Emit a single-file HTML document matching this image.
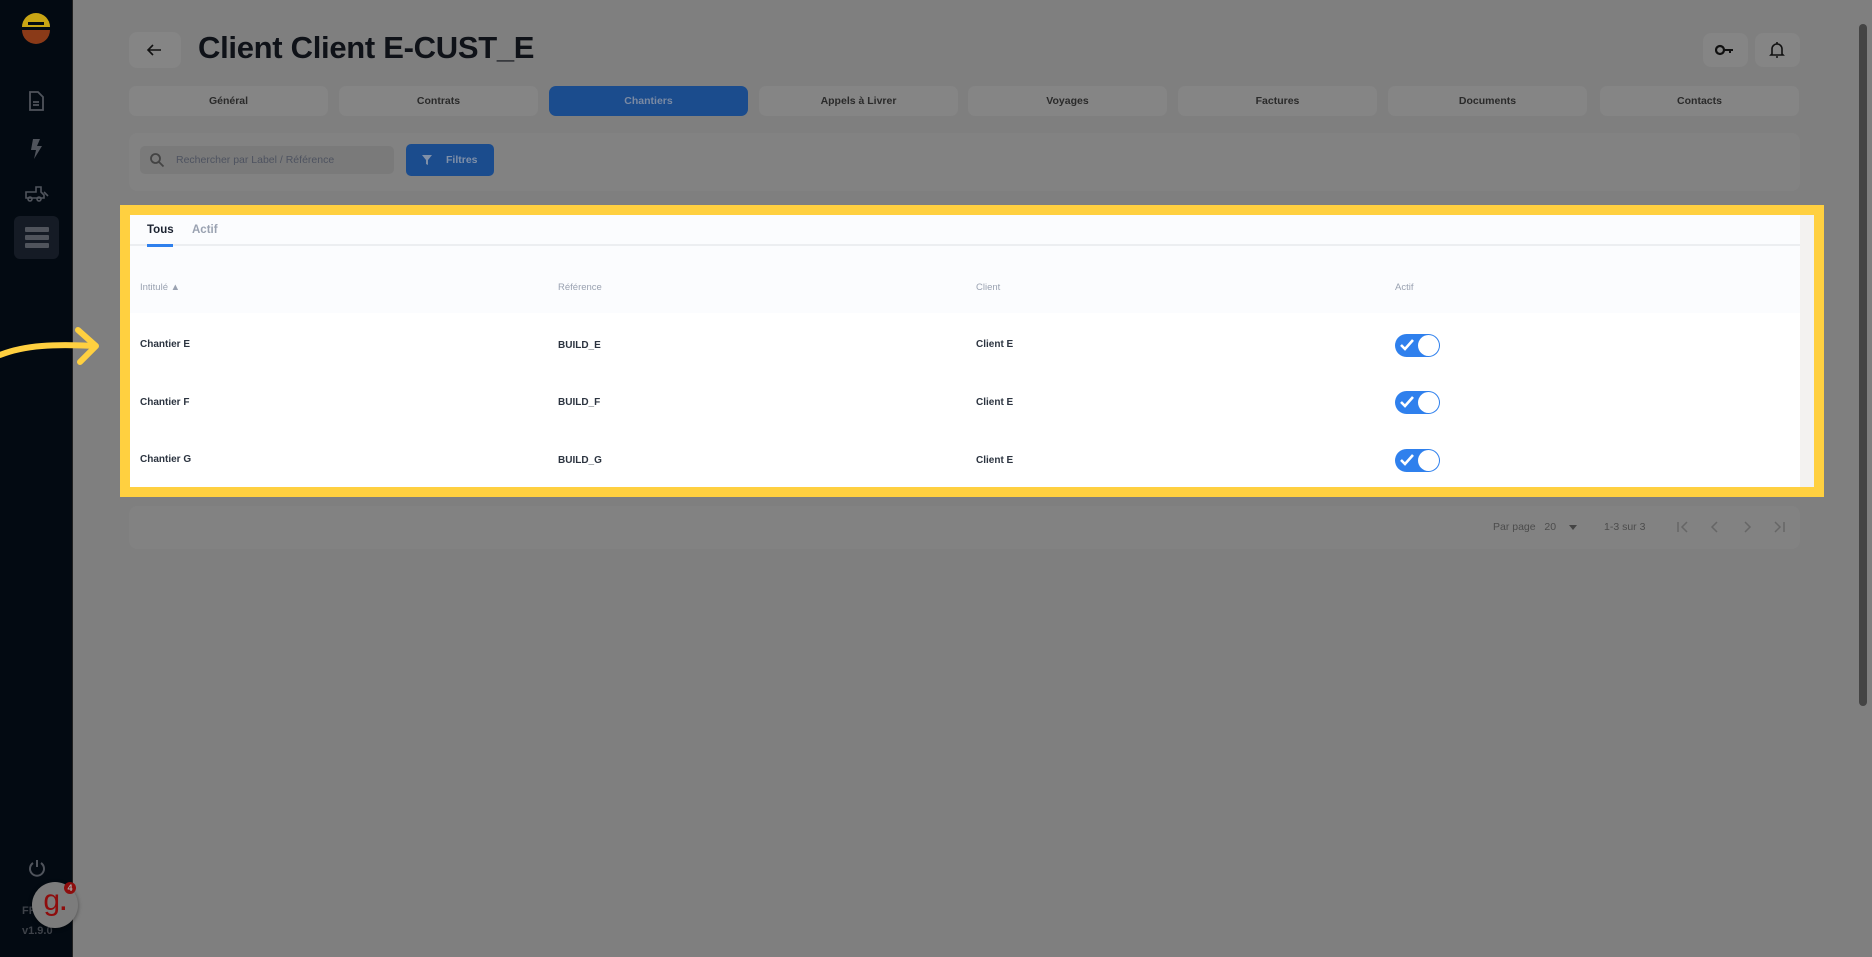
<!DOCTYPE html>
<html><head><meta charset="utf-8"><style>
*{box-sizing:border-box;margin:0;padding:0}
body{width:1872px;height:957px;overflow:hidden;background:#7f7f7f;font-family:"Liberation Sans",Arial,sans-serif;position:relative}
.a{position:absolute}
.side{left:0;top:0;width:73px;height:957px;background:#030a12;border-right:1px solid #222}
.btn{background:#858585;border-radius:8px}
.tab{position:absolute;top:86px;height:30px;width:199px;background:#858585;border-radius:7px;font-size:10.5px;font-weight:bold;color:#2a2a2a;text-align:center;line-height:30px}
.t{font-size:10px;font-weight:bold;color:#2c3440}
.h{font-size:9.5px;color:#9aa2b1}
.tg{position:absolute;width:45px;height:23px;border-radius:12px;background:#2f80ed}
.tg::after{content:"";position:absolute;right:1px;top:1px;width:21px;height:21px;border-radius:50%;background:#fff}
.pg{position:absolute;top:520px}
</style></head><body>
<div class="a side"></div>
<svg class="a" style="left:20px;top:13px" width="32" height="32" viewBox="0 0 32 32"><path d="M2 14 A14 14 0 0 1 30 14 Z" fill="#c9a514"/><rect x="8" y="9" width="16" height="3" fill="#030a12"/><path d="M2 17 H30 A14 14 0 0 1 2 17Z" fill="#8a3a18"/></svg>
<svg class="a" style="left:27px;top:91px" width="18" height="20" viewBox="0 0 18 20" fill="none" stroke="#50545c" stroke-width="1.8"><path d="M3 1h8l5 5v13H3z"/><path d="M6 11h6M6 14h6"/></svg>
<svg class="a" style="left:29px;top:139px" width="14" height="20" viewBox="0 0 14 20"><path d="M4 0h7l-3 7h5L5 20l2-9H2z" fill="#50545c"/></svg>
<svg class="a" style="left:24px;top:184px" width="26" height="18" viewBox="0 0 26 18" fill="none" stroke="#50545c" stroke-width="1.6"><path d="M2 8h10V3h5v5l3 3v3H2z"/><circle cx="6" cy="15" r="2"/><circle cx="15" cy="15" r="2"/><path d="M20 8l4 4"/></svg>
<div class="a" style="left:14px;top:216px;width:45px;height:43px;background:#151b25;border-radius:6px"></div>
<div class="a" style="left:25px;top:227px;width:24px;height:5px;background:#50545c;border-radius:1px"></div>
<div class="a" style="left:25px;top:235px;width:24px;height:5px;background:#50545c;border-radius:1px"></div>
<div class="a" style="left:25px;top:243px;width:24px;height:5px;background:#50545c;border-radius:1px"></div>
<svg class="a" style="left:28px;top:859px" width="18" height="18" viewBox="0 0 18 18" fill="none" stroke="#50545c" stroke-width="2"><path d="M5 4a7 7 0 1 0 8 0"/><path d="M9 1v7"/></svg>
<div class="a" style="left:22px;top:905px;font-size:11px;font-weight:bold;color:#3e4249">FR</div>
<div class="a" style="left:22px;top:925px;font-size:11px;font-weight:bold;color:#3e4249">v1.9.0</div>
<div class="a" style="left:32px;top:882px;width:46px;height:46px;border-radius:50%;background:#7c7c7c;box-shadow:0 1px 4px rgba(0,0,0,.4);font:30px 'Liberation Sans';color:#8e0d0d;text-align:center;line-height:38px">g<span style="font-size:24px;font-weight:bold">.</span></div>
<div class="a" style="left:64px;top:882px;width:12px;height:12px;border-radius:50%;background:#8e0d0d;color:#aaa;font-size:9px;text-align:center;line-height:12px;font-weight:bold">4</div>
<div class="a btn" style="left:129px;top:32px;width:52px;height:36px"></div>
<svg class="a" style="left:146px;top:42px" width="16" height="16" viewBox="0 0 16 16" fill="none" stroke="#111" stroke-width="1.6"><path d="M15 8H2M7 3L2 8l5 5"/></svg>
<div class="a" style="left:198px;top:30px;font-size:31px;font-weight:bold;color:#0f1218;letter-spacing:-0.3px">Client Client E-CUST_E</div>
<div class="a btn" style="left:1703px;top:33px;width:45px;height:34px"></div>
<div class="a btn" style="left:1755px;top:33px;width:45px;height:34px"></div>
<svg class="a" style="left:1715px;top:43px" width="20" height="14" viewBox="0 0 20 14"><circle cx="5" cy="7" r="4" fill="none" stroke="#111" stroke-width="2.2"/><path d="M9 6h9v2h-2v2h-2V8H9z" fill="#111"/></svg>
<svg class="a" style="left:1768px;top:41px" width="18" height="18" viewBox="0 0 18 18" fill="none" stroke="#111" stroke-width="1.6"><path d="M4 13V8a5 5 0 0 1 10 0v5l1 1H3z"/><path d="M9 1v2M8 16h2"/></svg>
<div class="tab" style="left:129px">Général</div>
<div class="tab" style="left:339px">Contrats</div>
<div class="tab" style="left:549px;background:#1b4c8d;color:#7b8aa3">Chantiers</div>
<div class="tab" style="left:759px">Appels à Livrer</div>
<div class="tab" style="left:968px">Voyages</div>
<div class="tab" style="left:1178px">Factures</div>
<div class="tab" style="left:1388px">Documents</div>
<div class="tab" style="left:1600px">Contacts</div>
<div class="a" style="left:129px;top:133px;width:1671px;height:58px;background:#828282;border-radius:8px"></div>
<div class="a" style="left:140px;top:146px;width:254px;height:28px;background:#7a7a7a;border-radius:5px"></div>
<svg class="a" style="left:149px;top:152px" width="16" height="16" viewBox="0 0 16 16" fill="none" stroke="#444" stroke-width="1.8"><circle cx="6.5" cy="6.5" r="4.5"/><path d="M10 10l4.5 4.5"/></svg>
<div class="a" style="left:176px;top:154px;font-size:10.5px;color:#4e5360">Rechercher par Label / Référence</div>
<div class="a" style="left:406px;top:144px;width:88px;height:32px;background:#1b4c8d;border-radius:5px"></div>
<svg class="a" style="left:422px;top:155px" width="10" height="10" viewBox="0 0 10 10"><path d="M0 0h10L6 5v5L4 9V5z" fill="#8090a8"/></svg>
<div class="a" style="left:446px;top:154px;font-size:10.5px;font-weight:bold;color:#8090a8">Filtres</div>
<div class="a" style="left:120px;top:205px;width:1704px;height:292px;background:#ffd040"></div>
<div class="a" style="left:130px;top:215px;width:1684px;height:272px;background:#f3f2f0"></div>
<div class="a" style="left:130px;top:215px;width:1670px;height:272px;background:#fff"></div>
<div class="a" style="left:130px;top:215px;width:1670px;height:98px;background:#fbfcfe"></div>
<div class="a" style="left:130px;top:244px;width:1670px;height:2px;background:#eceef1"></div>
<div class="a" style="left:147px;top:224px;font-size:11.5px;font-weight:bold;color:#1b2230">Tous</div>
<div class="a" style="left:192px;top:224px;font-size:11.5px;font-weight:bold;color:#9aa2b1">Actif</div>
<div class="a" style="left:147px;top:244px;width:26px;height:3px;background:#2f80ed"></div>
<div class="a h" style="left:140px;top:282px">Intitulé ▲</div>
<div class="a h" style="left:558px;top:282px">Référence</div>
<div class="a h" style="left:976px;top:282px">Client</div>
<div class="a h" style="left:1395px;top:282px">Actif</div>
<div class="a t" style="left:140px;top:339px">Chantier E</div>
<div class="a t" style="left:558px;top:340px">BUILD_E</div>
<div class="a t" style="left:976px;top:339px">Client E</div>
<div class="a t" style="left:140px;top:397px">Chantier F</div>
<div class="a t" style="left:558px;top:397px">BUILD_F</div>
<div class="a t" style="left:976px;top:397px">Client E</div>
<div class="a t" style="left:140px;top:454px">Chantier G</div>
<div class="a t" style="left:558px;top:455px">BUILD_G</div>
<div class="a t" style="left:976px;top:455px">Client E</div>
<div class="tg" style="left:1395px;top:334px"></div>
<div class="tg" style="left:1395px;top:391px"></div>
<div class="tg" style="left:1395px;top:449px"></div>
<svg class="a" style="left:1400px;top:339px" width="14" height="12" viewBox="0 0 14 12"><path d="M1 6l4 4 8-9" fill="none" stroke="#fff" stroke-width="2.6"/></svg>
<svg class="a" style="left:1400px;top:396px" width="14" height="12" viewBox="0 0 14 12"><path d="M1 6l4 4 8-9" fill="none" stroke="#fff" stroke-width="2.6"/></svg>
<svg class="a" style="left:1400px;top:454px" width="14" height="12" viewBox="0 0 14 12"><path d="M1 6l4 4 8-9" fill="none" stroke="#fff" stroke-width="2.6"/></svg>
<svg class="a" style="left:0;top:310px" width="110" height="60" viewBox="0 0 110 60" fill="none" stroke="#ffd040" stroke-width="6" stroke-linecap="round" stroke-linejoin="round"><path d="M0 45 C25 35 55 34 95 36"/><path d="M78 20 L96 36 L80 52"/></svg>
<div class="a" style="left:129px;top:506px;width:1671px;height:43px;background:#828282;border-radius:8px"></div>
<div class="a" style="left:1493px;top:521px;font-size:10.5px;color:#4c4c4c">Par page &nbsp;&nbsp;20</div>
<div class="a" style="left:1569px;top:525px;border:4px solid transparent;border-top:5px solid #444"></div>
<div class="a" style="left:1604px;top:521px;font-size:10.5px;color:#4c4c4c">1-3 sur 3</div>
<svg class="pg" style="left:1676px" width="14" height="14" viewBox="0 0 14 14" fill="none" stroke="#666" stroke-width="1.5"><path d="M2 2v10M11 2L6 7l5 5"/></svg>
<svg class="pg" style="left:1708px" width="14" height="14" viewBox="0 0 14 14" fill="none" stroke="#666" stroke-width="1.5"><path d="M9 2L4 7l5 5"/></svg>
<svg class="pg" style="left:1740px" width="14" height="14" viewBox="0 0 14 14" fill="none" stroke="#666" stroke-width="1.5"><path d="M5 2l5 5-5 5"/></svg>
<svg class="pg" style="left:1772px" width="14" height="14" viewBox="0 0 14 14" fill="none" stroke="#666" stroke-width="1.5"><path d="M3 2l5 5-5 5M12 2v10"/></svg>
<div class="a" style="left:1859px;top:24px;width:8px;height:682px;background:#444;border-radius:4px"></div>
</body></html>
